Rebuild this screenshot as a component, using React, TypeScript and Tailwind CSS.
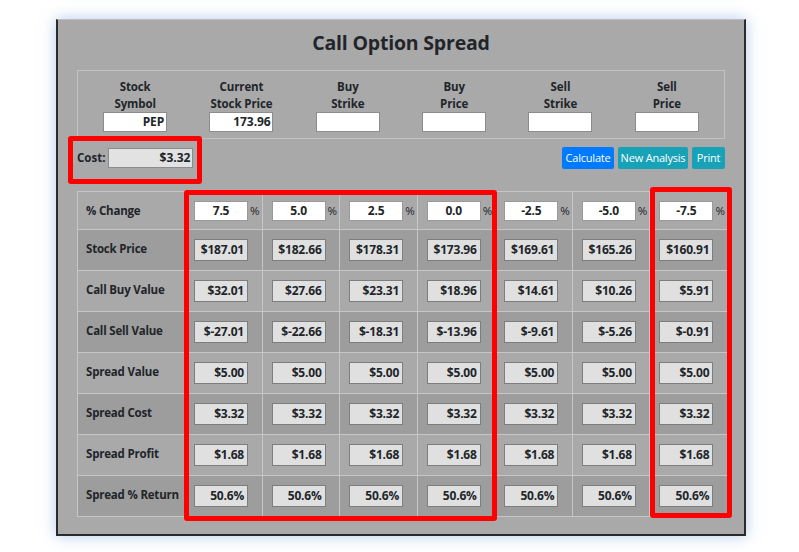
import React from 'react';

const topFields = [
  { l1: 'Stock', l2: 'Symbol', value: 'PEP' },
  { l1: 'Current', l2: 'Stock Price', value: '173.96' },
  { l1: 'Buy', l2: 'Strike', value: '' },
  { l1: 'Buy', l2: 'Price', value: '' },
  { l1: 'Sell', l2: 'Strike', value: '' },
  { l1: 'Sell', l2: 'Price', value: '' },
];

const changes = ['7.5', '5.0', '2.5', '0.0', '-2.5', '-5.0', '-7.5'];

const rows: { label: string; values: string[] }[] = [
  { label: 'Stock Price', values: ['$187.01', '$182.66', '$178.31', '$173.96', '$169.61', '$165.26', '$160.91'] },
  { label: 'Call Buy Value', values: ['$32.01', '$27.66', '$23.31', '$18.96', '$14.61', '$10.26', '$5.91'] },
  { label: 'Call Sell Value', values: ['$-27.01', '$-22.66', '$-18.31', '$-13.96', '$-9.61', '$-5.26', '$-0.91'] },
  { label: 'Spread Value', values: Array(7).fill('$5.00') },
  { label: 'Spread Cost', values: Array(7).fill('$3.32') },
  { label: 'Spread Profit', values: Array(7).fill('$1.68') },
  { label: 'Spread % Return', values: Array(7).fill('50.6%') },
];

export default function App() {
  return (
    <div className="min-h-[552px] bg-white pt-[19px] pl-[56px] font-['Open_Sans',sans-serif] text-[#212529]">
      <div className="relative w-[690px] h-[517px] bg-[#a9a9a9] border-x-2 border-b-2 border-t border-x-[#2b2b2b] border-b-[#2b2b2b] border-t-[#bdbdbd] px-[19px] shadow-[0_0_14px_rgba(120,160,220,0.55)]">
        {/* Title */}
        <h1 className="pt-[9px] mb-[13px] text-center text-[19.5px] leading-[28px] font-bold tracking-[-0.2px]">
          Call Option Spread
        </h1>

        {/* Inputs */}
        <div className="border border-[#c2c2c2] grid grid-cols-6 px-[4px] pt-[7px] pb-[6px]">
          {topFields.map((f, i) => (
            <div key={i} className="flex flex-col items-center text-[11.5px] font-bold leading-[17px] tracking-[-0.1px]">
              <span>{f.l1}</span>
              <span>{f.l2}</span>
              <div className="w-[64px] h-[20px] bg-white border border-[#8c8c8c] text-right pr-[2px] leading-[18px] text-[12px]">
                {f.value}
              </div>
            </div>
          ))}
        </div>

        {/* Cost + buttons */}
        <div className="flex items-center justify-between mt-[8px] h-[22px]">
          <div className="flex items-center gap-[3px] text-[11.5px] font-bold">
            <span>Cost:</span>
            <div className="w-[85px] h-[20px] bg-[#e2e2e2] border border-[#8c8c8c] text-right pr-[2px] leading-[18px] text-[12px]">
              $3.32
            </div>
          </div>
          <div className="flex items-center gap-[4px] text-[11px] text-white tracking-[-0.2px]">
            <button className="w-[52px] h-[22px] rounded-[2px] bg-[#007bff]">Calculate</button>
            <button className="w-[70px] h-[22px] rounded-[2px] bg-[#17a2b8]">New Analysis</button>
            <button className="w-[33px] h-[22px] rounded-[2px] bg-[#17a2b8]">Print</button>
          </div>
        </div>

        {/* Table */}
        <table className="mt-[22px] w-[651px] border-collapse table-fixed text-[11.5px] font-bold tracking-[-0.2px]">
          <colgroup>
            <col className="w-[107px]" />
            {changes.map((c) => (
              <col key={c} />
            ))}
          </colgroup>
          <tbody>
            <tr className="h-[38px] bg-[#a9a9a9]">
              <td className="border border-[#c6c6c6] pl-[8px] align-middle">% Change</td>
              {changes.map((c) => (
                <td key={c} className="border border-[#c6c6c6] pl-[9px] align-middle">
                  <div className="flex items-center gap-[2px]">
                    <div className="w-[54px] h-[20px] bg-white border border-[#999] text-center leading-[18px] text-[12px]">{c}</div>
                    <span className="font-normal">%</span>
                  </div>
                </td>
              ))}
            </tr>
            {rows.map((r, ri) => (
              <tr key={r.label} className={ri % 2 === 0 ? 'h-[41px] bg-[#9d9d9d]' : 'h-[41px] bg-[#a9a9a9]'}>
                <td className="border border-[#c6c6c6] pl-[8px] pb-[3px] align-middle whitespace-nowrap">{r.label}</td>
                {r.values.map((v, vi) => (
                  <td key={vi} className="border border-[#c6c6c6] pl-[9px] align-middle">
                    <div className="w-[54px] h-[22px] bg-[#e0e0e0] border border-[#7d7d7d] text-right pr-[3px] leading-[20px] text-[12px]">
                      {v}
                    </div>
                  </td>
                ))}
              </tr>
            ))}
          </tbody>
        </table>

        {/* Annotation boxes */}
        <div className="absolute left-[10px] top-[116px] w-[134px] h-[48px] border-[5px] border-[#ff0000] rounded-[3px]" />
        <div className="absolute left-[126px] top-[170px] w-[313px] h-[331px] border-[5px] border-[#ff0000] rounded-[3px]" />
        <div className="absolute left-[592px] top-[167px] w-[82px] h-[331px] border-[5px] border-[#ff0000] rounded-[3px]" />
      </div>
    </div>
  );
}
